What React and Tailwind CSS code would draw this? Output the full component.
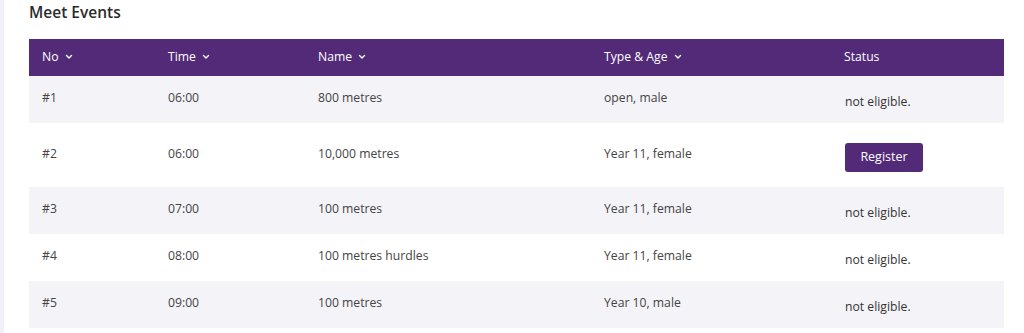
import React from 'react';

const events = [
    { no: 1, time: '06:00', name: '800 metres', type: 'open, male', eligible: false },
    { no: 2, time: '06:00', name: '10,000 metres', type: 'Year 11, female', eligible: true },
    { no: 3, time: '07:00', name: '100 metres', type: 'Year 11, female', eligible: false },
    { no: 4, time: '08:00', name: '100 metres hurdles', type: 'Year 11, female', eligible: false },
    { no: 5, time: '09:00', name: '100 metres', type: 'Year 10, male', eligible: false },
];

const Chevron = () => (
    <svg width="8" height="6" viewBox="0 0 8 6" className="ml-[6px] inline-block">
        <path d="M1.5 1.5 L4 4 L6.5 1.5" fill="none" stroke="currentColor" strokeWidth="1.4" strokeLinecap="round" strokeLinejoin="round"/>
    </svg>
);

const headers = [
    { label: 'No', w: 'w-[126px]', sort: true },
    { label: 'Time', w: 'w-[150px]', sort: true },
    { label: 'Name', w: 'w-[286px]', sort: true },
    { label: 'Type & Age', w: 'w-[240px]', sort: true },
    { label: 'Status', w: '', sort: false },
];

const App = () => {
    return (
        <div className="flex min-h-[333px] bg-white text-[#444]" style={{ fontFamily: '"Open Sans", sans-serif' }}>
            <div className="w-[4px] shrink-0 bg-[#f0f0f6]" />
            <div className="flex-1 pl-[25px] pr-[16px]">
                <h1 className="pt-[2px] text-[15.5px] font-semibold leading-[20px] text-[#2b2b2b]">Meet Events</h1>
                <table className="mt-[17px] w-[975px] border-collapse text-[12.2px]">
                    <thead>
                        <tr className="h-[37px] bg-[#522a78] text-white">
                            {headers.map(h => (
                                <th key={h.label} className={`${h.w} pl-[13px] text-left font-normal`}>
                                    <span className="inline-flex items-center">
                                        {h.label}
                                        {h.sort && <Chevron />}
                                    </span>
                                </th>
                            ))}
                        </tr>
                    </thead>
                    <tbody>
                        {events.map((ev, i) => (
                            <tr key={ev.no} className={`${ev.eligible ? 'h-[64px]' : 'h-[47px]'} ${i % 2 === 0 ? 'bg-[#f4f3f8]' : 'bg-white'}`}>
                                <td className="pl-[13px] pb-[2px]">#{ev.no}</td>
                                <td className="pl-[13px] pb-[2px]">{ev.time}</td>
                                <td className="pl-[13px] pb-[2px]">{ev.name}</td>
                                <td className="pl-[13px] pb-[2px]">{ev.type}</td>
                                <td className="pl-[14px] pt-[6px]">
                                    {ev.eligible ? (
                                        <button className="mb-[2px] h-[29px] w-[78px] rounded-[3px] bg-[#522a78] text-[12.5px] text-white">Register</button>
                                    ) : (
                                        <span className="text-[#333]">not eligible.</span>
                                    )}
                                </td>
                            </tr>
                        ))}
                    </tbody>
                </table>
            </div>
        </div>
    );
};

export default App;
